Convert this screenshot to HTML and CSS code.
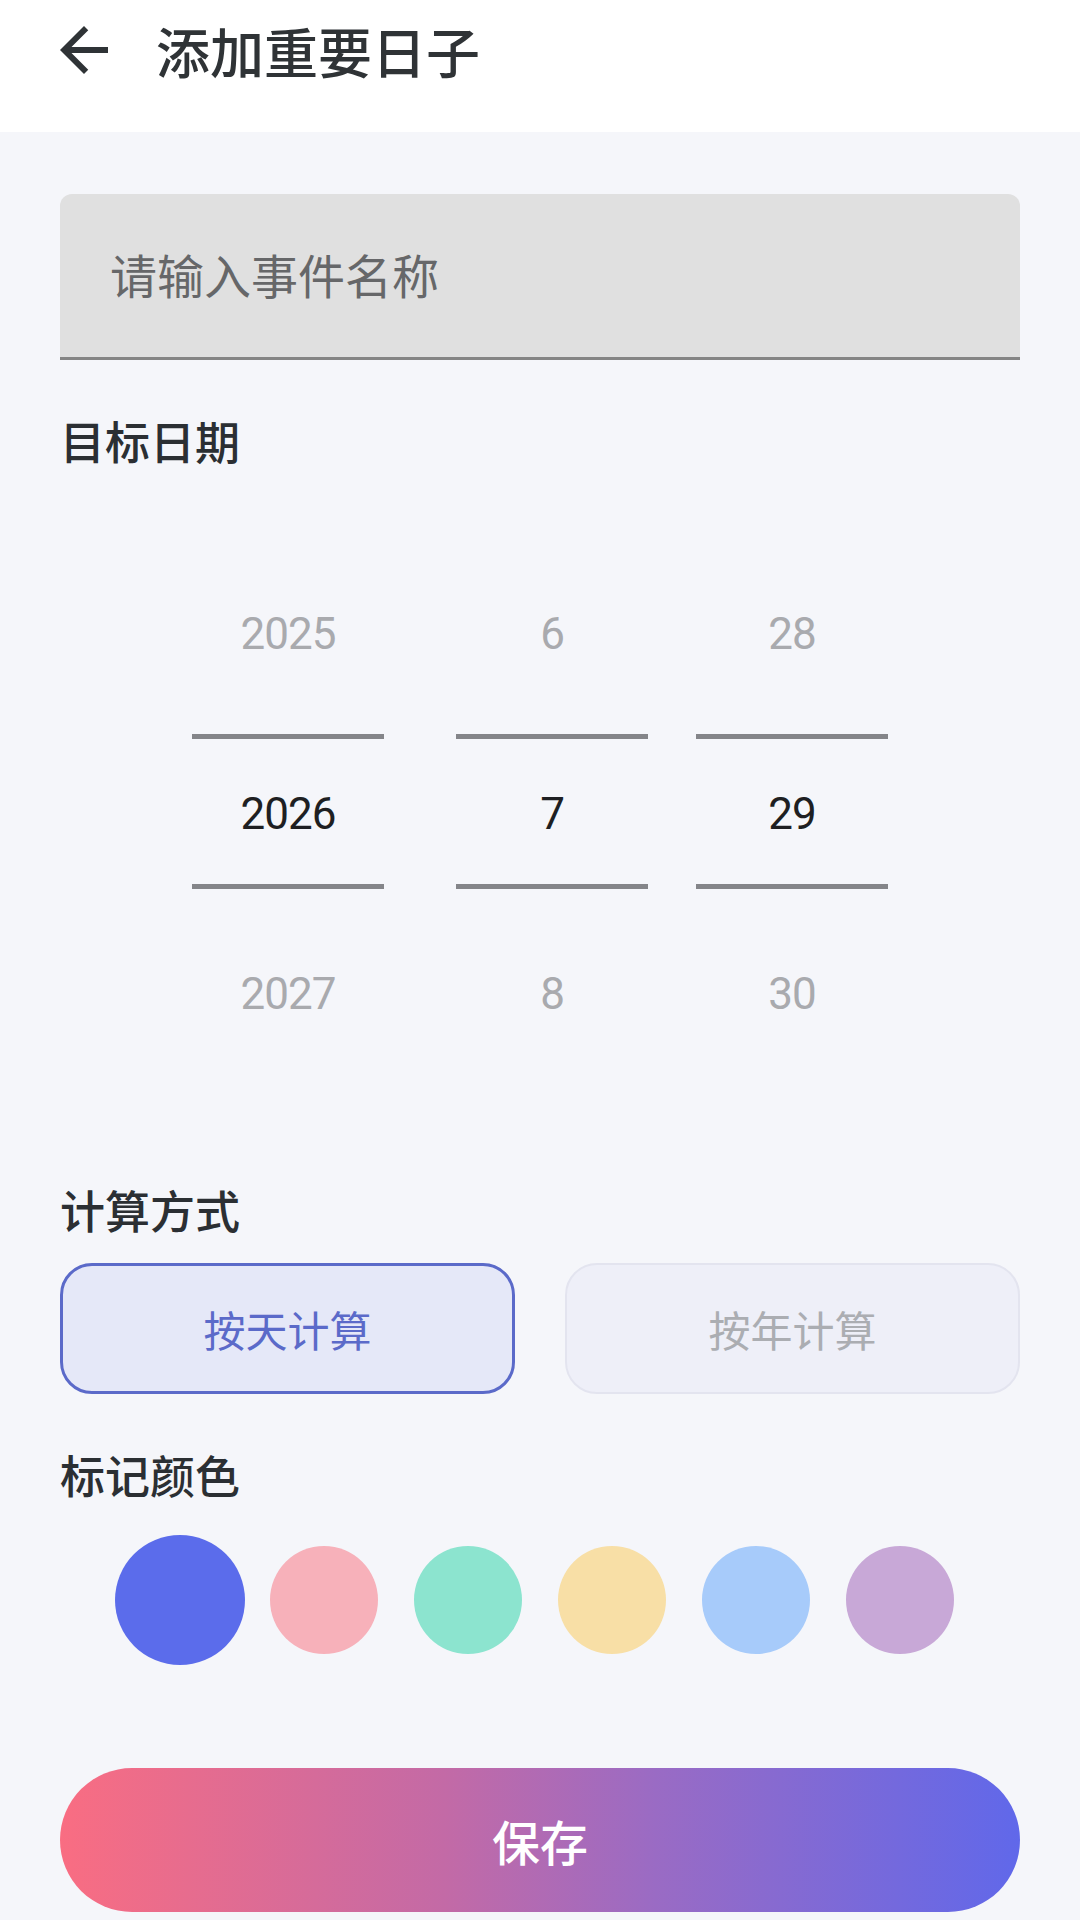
FILE: index.html
```html
<!DOCTYPE html>
<html lang="zh-CN">
<head>
<meta charset="utf-8">
<title>添加重要日子</title>
<link rel="stylesheet" href="styles.css">
</head>
<body>
<div class="app">
  <header class="topbar">
    <svg class="back" viewBox="0 0 24 24" aria-hidden="true"><path d="M20 11H7.83l5.59-5.59L12 4l-8 8 8 8 1.41-1.41L7.83 13H20v-2z"/></svg>
    <h1 class="title">添加重要日子</h1>
  </header>
  <main class="content">
    <div class="field"><span class="placeholder">请输入事件名称</span></div>
    <div class="label label-date">目标日期</div>
    <div class="picker">
      <div class="col col-year">
        <div class="cell dim">2025</div>
        <div class="cell sel">2026</div>
        <div class="cell dim">2027</div>
      </div>
      <div class="col col-month">
        <div class="cell dim">6</div>
        <div class="cell sel">7</div>
        <div class="cell dim">8</div>
      </div>
      <div class="col col-day">
        <div class="cell dim">28</div>
        <div class="cell sel">29</div>
        <div class="cell dim">30</div>
      </div>
    </div>
    <div class="label label-calc">计算方式</div>
    <div class="modes">
      <div class="mode active">按天计算</div>
      <div class="mode">按年计算</div>
    </div>
    <div class="label label-color">标记颜色</div>
    <div class="swatches">
      <div class="slot"><span class="dot big c1"></span></div>
      <div class="slot"><span class="dot c2"></span></div>
      <div class="slot"><span class="dot c3"></span></div>
      <div class="slot"><span class="dot c4"></span></div>
      <div class="slot"><span class="dot c5"></span></div>
      <div class="slot"><span class="dot c6"></span></div>
    </div>
    <div class="save">保存</div>
  </main>
</div>
</body>
</html>
```
FILE: styles.css
```css
* { box-sizing: border-box; }
html, body {
  margin: 0;
  padding: 0;
  background: #F5F6FA;
}
body {
  font-family: "Noto Sans CJK SC", "Noto Sans", sans-serif;
  color: #2B2F33;
}
.app {
  width: 1080px;
  height: 1920px;
  overflow: hidden;
  background: #F5F6FA;
}
.topbar {
  height: 132px;
  background: #FFFFFF;
  display: flex;
  align-items: center;
  padding-left: 48px;
}
.back {
  width: 72px;
  height: 72px;
  fill: #2F3336;
  margin-top: -32px;
}
.title {
  margin: -30px 0 0 36px;
  font-size: 54px;
  font-weight: 500;
  line-height: 72px;
  color: #2F3336;
}
.content {
  padding: 0 60px;
}
.field {
  margin-top: 62px;
  height: 166px;
  background: #E0E0E0;
  border-radius: 12px 12px 0 0;
  border-bottom: 3px solid #858585;
  display: flex;
  align-items: center;
  padding-left: 50px;
}
.placeholder {
  font-size: 47px;
  color: #666769;
  line-height: 60px;
  margin-top: -3px;
}
.label {
  font-size: 45px;
  font-weight: 500;
  line-height: 60px;
  color: #2B2F33;
}
.label-date { margin-top: 51px; }
.picker {
  margin-top: 73px;
  display: flex;
  padding-left: 132px;
  font-family: Roboto, "Liberation Sans", sans-serif;
}
.col {
  width: 192px;
  display: flex;
  flex-direction: column;
}
.col-month { margin-left: 72px; }
.col-day { margin-left: 48px; }
.cell {
  height: 180px;
  display: flex;
  align-items: center;
  justify-content: center;
  font-size: 44px;
  letter-spacing: -1px;
}
.cell.dim { color: #A9AAAE; }
.cell.sel {
  color: #1E1F22;
  height: 155px;
  margin: 10px 0 15px;
  border-top: 5px solid #848589;
  border-bottom: 5px solid #848589;
  padding-top: 4px;
}
.label-calc { margin-top: 96px; }
.modes {
  margin-top: 23px;
  display: grid;
  grid-template-columns: 1fr 1fr;
  gap: 50px;
}
.mode {
  height: 131px;
  border-radius: 32px;
  display: flex;
  align-items: center;
  justify-content: center;
  font-size: 42px;
  background: #EEEFF8;
  border: 2px solid #E3E4EF;
  color: #ABADB2;
}
.mode.active {
  background: #E5E8F8;
  border: 3px solid #5B6AC9;
  color: #5B6AC9;
}
.label-color { margin-top: 51px; }
.swatches {
  margin-top: 30px;
  height: 130px;
  display: flex;
  justify-content: center;
  align-items: center;
}
.slot {
  width: 144px;
  display: flex;
  justify-content: center;
  align-items: center;
}
.dot {
  display: block;
  width: 108px;
  height: 108px;
  border-radius: 50%;
}
.dot.big { width: 130px; height: 130px; }
.c1 { background: #5B6CEB; }
.c2 { background: #F7B1BA; }
.c3 { background: #8CE4CF; }
.c4 { background: #F8DFA6; }
.c5 { background: #A7CBFA; }
.c6 { background: #C8A8D7; }
.save {
  margin-top: 103px;
  height: 144px;
  border-radius: 72px;
  background: linear-gradient(90deg, #F96D82 0%, #C36AA6 40%, #9A6BC4 62%, #6068EA 100%);
  color: #FFFFFF;
  font-size: 48px;
  font-weight: 500;
  display: flex;
  align-items: center;
  justify-content: center;
}
```
